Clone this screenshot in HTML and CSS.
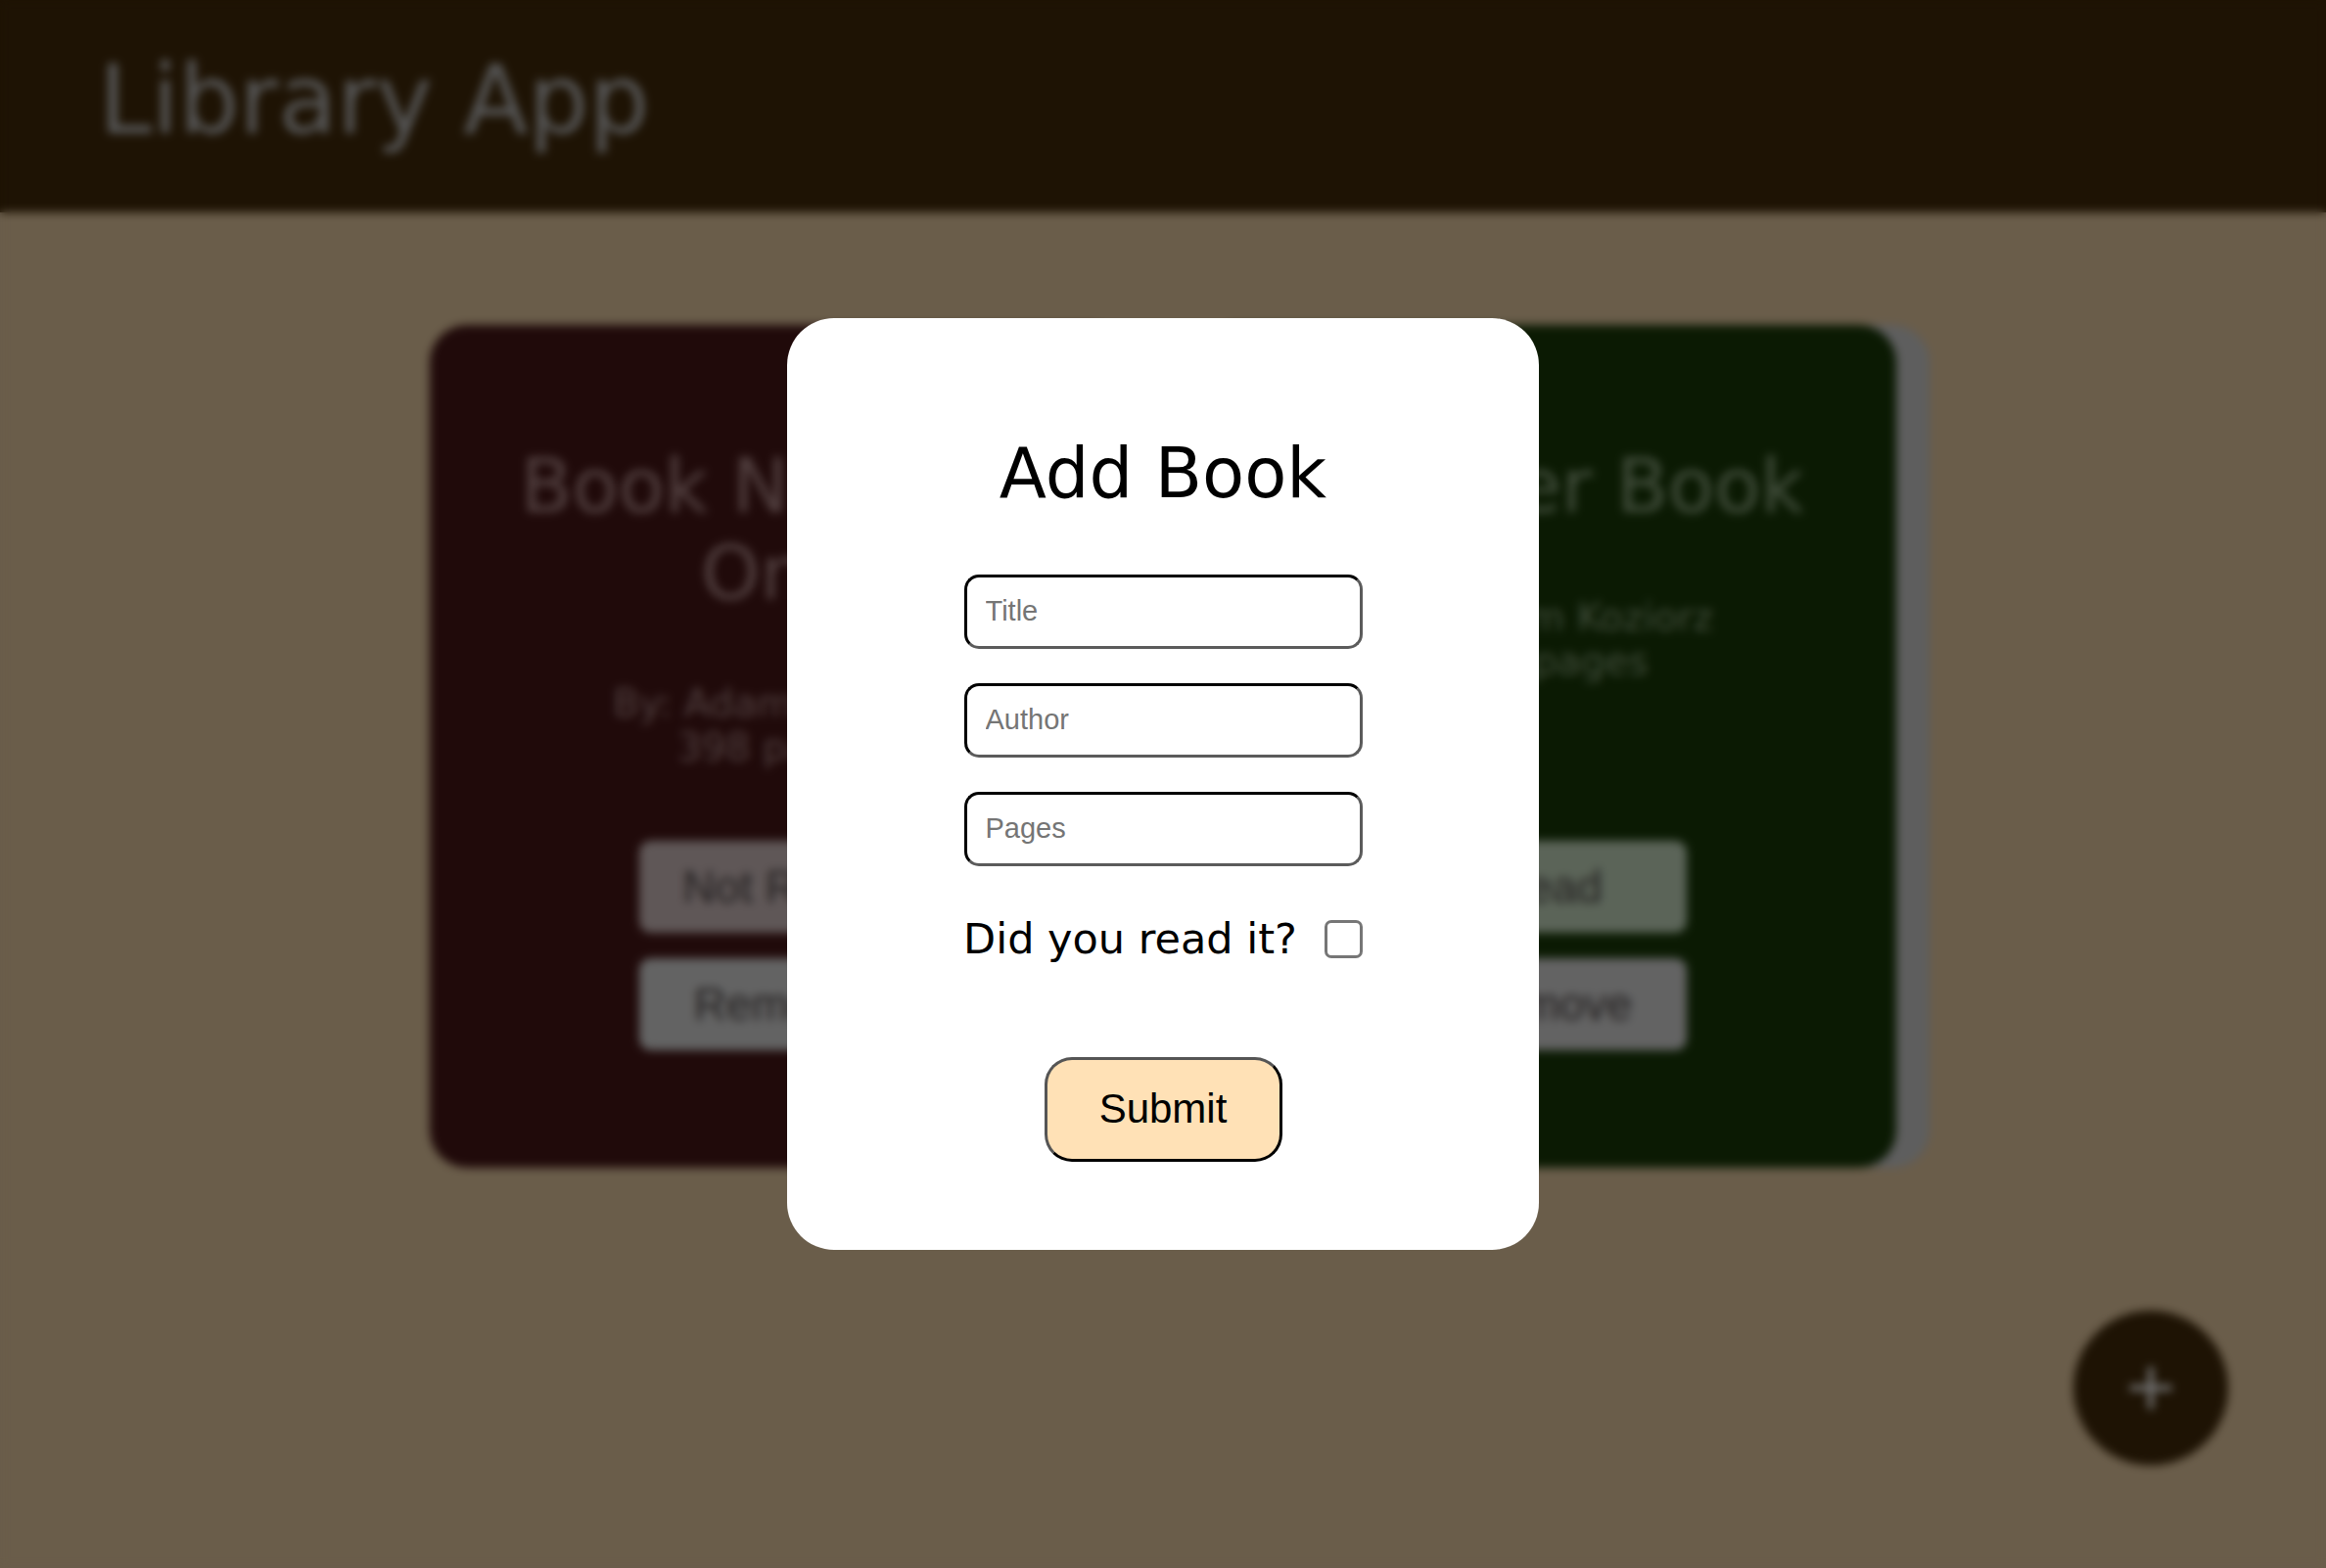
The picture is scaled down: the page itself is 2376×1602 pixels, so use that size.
FILE: index.html
```html
<!DOCTYPE html>
<html lang="en">
<head>
<meta charset="utf-8">
<title>Library App</title>
<link rel="stylesheet" href="styles.css">
</head>
<body>
<header class="topbar">
  <h1 class="app-title">Library App</h1>
</header>
<main class="shelf">
  <article class="book book-unread">
    <h2 class="book-title">Book Number One</h2>
    <div class="book-info">
      <p>By: Adam Koziorz</p>
      <p>398 pages</p>
    </div>
    <div class="book-actions">
      <button class="btn btn-notread" type="button">Not Read</button>
      <button class="btn btn-remove" type="button">Remove</button>
    </div>
  </article>
  <article class="book book-read">
    <h2 class="book-title">Another Book</h2>
    <div class="book-info">
      <p>By: Adam Koziorz</p>
      <p>396 pages</p>
    </div>
    <div class="book-actions">
      <button class="btn btn-readstate" type="button">Read</button>
      <button class="btn btn-remove" type="button">Remove</button>
    </div>
  </article>
</main>
<button class="fab" type="button" aria-label="Add book">
  <svg viewBox="0 0 50 50" width="50" height="50"><path d="M25 6v38M6 25h38" stroke="#727272" stroke-width="6" stroke-linecap="round" fill="none"/></svg>
</button>
<div class="overlay">
  <form class="modal">
    <h2 class="modal-title">Add Book</h2>
    <input class="field" type="text" placeholder="Title">
    <input class="field" type="text" placeholder="Author">
    <input class="field" type="number" placeholder="Pages">
    <label class="read-row">
      <span class="read-label">Did you read it?</span>
      <input class="read-check" type="checkbox">
    </label>
    <button class="submit" type="button">Submit</button>
  </form>
</div>
</body>
</html>
```
FILE: styles.css
```css
* { box-sizing: border-box; }

html, body {
  margin: 0;
  padding: 0;
}

body {
  background: #6a5d4a;
  min-height: 1602px;
  font-family: "DejaVu Sans", sans-serif;
  overflow: hidden;
}

.topbar {
  height: 217px;
  background: #1e1304;
  padding: 44px 0 0 101px;
}

.app-title {
  margin: 0;
  font-size: 97.5px;
  font-weight: normal;
  line-height: 1.2;
  color: #555555;
}

.shelf {
  display: flex;
  justify-content: center;
  gap: 76px;
  padding-top: 115px;
}

.book {
  width: 711px;
  height: 861px;
  border-radius: 38px;
  padding: 121px 88px 120px;
  display: flex;
  flex-direction: column;
  align-items: center;
  text-align: center;
  box-shadow: 34px 0 1px #5e5e5e;
}

.book-unread { background: #200a0a; }
.book-read { background: #0b1a03; }

.book-title {
  margin: 0;
  font-size: 77px;
  font-weight: normal;
  line-height: 1.15;
  color: rgba(255, 255, 255, 0.22);
}

.book-info {
  margin-top: 66px;
  font-size: 39px;
  line-height: 45px;
  color: rgba(255, 255, 255, 0.24);
}

.book-info p { margin: 0; }

.book-actions {
  margin-top: auto;
  display: flex;
  flex-direction: column;
  gap: 26px;
}

.btn {
  width: 283px;
  height: 94px;
  border: none;
  border-radius: 12px;
  font-family: "Liberation Sans", Arial, sans-serif;
  font-size: 46px;
  color: #232020;
}

.btn-notread { background: #5f5757; }
.btn-remove { background: #636363; }
.btn-readstate { background: #5b6458; }

.fab {
  position: fixed;
  right: 100px;
  bottom: 105px;
  width: 158px;
  height: 158px;
  border-radius: 50%;
  border: none;
  background: #1e1304;
  display: flex;
  align-items: center;
  justify-content: center;
  padding: 0;
}

.overlay {
  position: fixed;
  inset: 0;
  backdrop-filter: blur(5px);
  display: flex;
  align-items: center;
  justify-content: center;
}

.modal {
  width: 768px;
  height: 952px;
  background: #ffffff;
  border-radius: 48px;
  padding: 117px 0 0;
  display: flex;
  flex-direction: column;
  align-items: center;
}

.modal-title {
  margin: 0 0 60px;
  font-size: 70.5px;
  font-weight: normal;
  line-height: 1.2;
  color: #000000;
}

.field {
  width: 407px;
  height: 76px;
  margin: 0 0 35px;
  padding: 0 0 0 19px;
  border: 3px solid;
  border-color: #000000 #5b5b5b #5b5b5b #000000;
  border-radius: 15px;
  background: #ffffff;
  font-family: "Liberation Sans", Arial, sans-serif;
  font-size: 29px;
  color: #000000;
  outline: none;
  -moz-appearance: textfield;
}

.field::-webkit-outer-spin-button,
.field::-webkit-inner-spin-button {
  -webkit-appearance: none;
  margin: 0;
}

.field::placeholder { color: #757575; }

.read-row {
  margin-top: 20px;
  display: flex;
  align-items: center;
  gap: 28px;
  height: 39px;
}

.read-label {
  font-size: 43px;
  line-height: 39px;
  color: #000000;
}

.read-check {
  -webkit-appearance: none;
  appearance: none;
  width: 39px;
  height: 39px;
  margin: 0;
  border: 3px solid #767676;
  border-radius: 7px;
  background: #ffffff;
}

.submit {
  margin-top: 101px;
  width: 243px;
  height: 107px;
  border: 3px solid;
  border-color: #555555 #000000 #000000 #555555;
  border-radius: 28px;
  background: #ffe1b6;
  font-family: "Liberation Sans", Arial, sans-serif;
  font-size: 42px;
  color: #000000;
}
```
